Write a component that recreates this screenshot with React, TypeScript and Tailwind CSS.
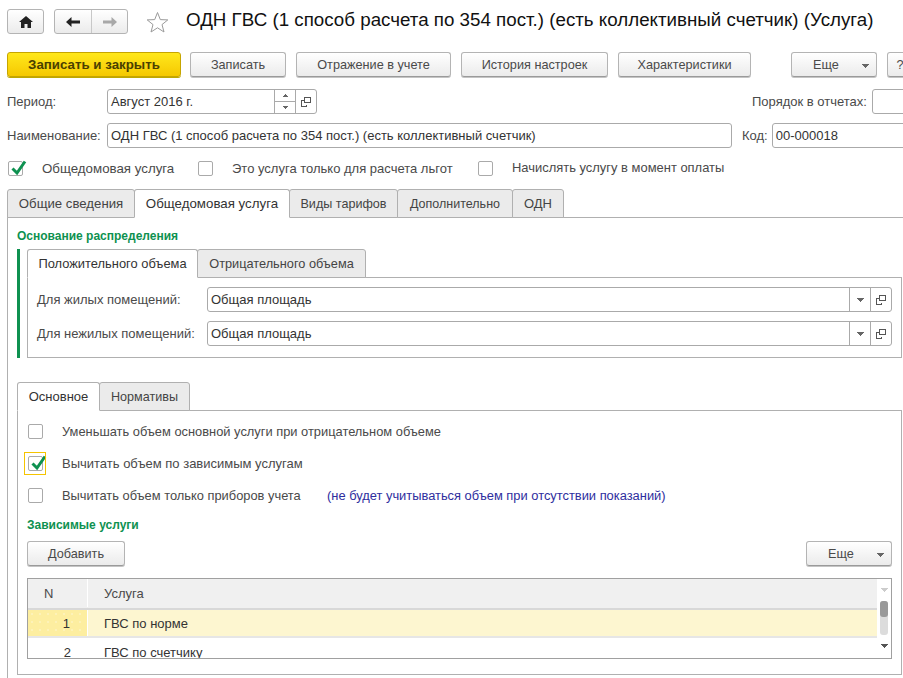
import type { ReactNode } from 'react';

const Copy = () => (
  <svg width="12" height="12" viewBox="0 0 12 12" fill="none" stroke="#555" strokeWidth="1" shapeRendering="crispEdges">
    <path d="M4.5 1.5h6v5h-6z" />
    <path d="M3.5 4.5h-2v6h5v-2" />
  </svg>
);

const Caret = ({ color = '#666' }: { color?: string }) => (
  <svg width="7" height="4" viewBox="0 0 7 4" shapeRendering="crispEdges">
    <path d="M0 0h7v1h-1v1h-1v1h-1v1h-1v-1h-1v-1h-1v-1h-1z" fill={color} />
  </svg>
);

const Check = () => (
  <svg width="20" height="20" viewBox="0 0 20 20" className="absolute left-[0px] top-[-4px]">
    <path d="M3.5 10.5 L8 15 L16 3.5" fill="none" stroke="#0e9150" strokeWidth="3" />
  </svg>
);

function Btn({ w, children, caret }: { w: string; children: ReactNode; caret?: boolean }) {
  return (
    <button className={`${w} relative h-[25px] shrink-0 rounded-[3px] border border-[#b4b4b4] border-b-[#9a9a9a] bg-gradient-to-b from-white to-[#ebebeb] pt-px text-[12.7px] text-[#4a4a4a] shadow-[0_1px_0_#c4c4c4]`}>
      <span className={caret ? 'pr-[16px]' : ''}>{children}</span>
      {caret && (
        <span className="absolute right-[7px] top-[11px] flex">
          <Caret />
        </span>
      )}
    </button>
  );
}

function Box({ checked }: { checked?: boolean }) {
  return (
    <span className="relative block h-[15px] w-[15px] shrink-0 rounded-[2px] border border-[#aaaaaa] bg-white">
      {checked && <Check />}
    </span>
  );
}

function Tab({ w, active, children }: { w: string; active?: boolean; children: ReactNode }) {
  return (
    <div
      className={`${w} -ml-px flex h-[29px] shrink-0 items-center justify-center rounded-t-[3px] border border-[#b0b0b0] first:ml-0 ${
        active ? 'z-10 border-b-white bg-white text-[#333333]' : 'bg-[#ebebeb] text-[#444444]'
      }`}
    >
      {children}
    </div>
  );
}

function Field({ w, children, caret }: { w: string; children: ReactNode; caret?: boolean }) {
  return (
    <div className={`${w} flex h-[25px] shrink-0 items-center rounded-[3px] border border-[#aaaaaa] bg-white text-[#333333]`}>
      <span className="flex-1 pl-[3px]">{children}</span>
      {caret && (
        <span className="flex h-full w-[21px] items-center justify-center border-l border-[#aaaaaa]">
          <Caret />
        </span>
      )}
      <span className="flex h-full w-[21px] items-center justify-center border-l border-[#aaaaaa]">
        <Copy />
      </span>
    </div>
  );
}

export default function App() {
  return (
    <div className="h-[678px] w-[903px] overflow-hidden bg-white font-['Liberation_Sans',Arial,sans-serif] text-[13px] leading-none text-[#4a4a4a]">
      {/* Title bar */}
      <div className="box-content flex h-[29px] items-center pl-[7px] pt-[7px]">
        <div className="flex h-[25px] w-[37px] items-center justify-center rounded-[3px] border border-[#b4b4b4] bg-gradient-to-b from-white to-[#ebebeb]">
          <svg width="14" height="12" viewBox="0 0 14 12">
            <path d="M7 0 L14 6 L12 6 L12 12 L8.5 12 L8.5 8 L5.5 8 L5.5 12 L2 12 L2 6 L0 6 Z" fill="#222" />
          </svg>
        </div>
        <div className="ml-[10px] flex h-[25px] w-[74px] rounded-[3px] border border-[#b4b4b4] bg-gradient-to-b from-white to-[#ebebeb]">
          <span className="flex w-[37px] items-center justify-center border-r border-[#c8c8c8]">
            <svg width="14" height="10" viewBox="0 0 14 10">
              <path d="M0 5 L5.5 0 V3.5 H14 V6.5 H5.5 V10 Z" fill="#222" />
            </svg>
          </span>
          <span className="flex flex-1 items-center justify-center">
            <svg width="14" height="10" viewBox="0 0 14 10">
              <path d="M14 5 L8.5 0 V3.5 H0 V6.5 H8.5 V10 Z" fill="#a8a8a8" />
            </svg>
          </span>
        </div>
        <svg className="ml-[18px]" width="23" height="22" viewBox="0 0 23 22">
          <path d="M11.5 1.5 L14.3 8.6 L21.8 8.9 L16 13.6 L18 21 L11.5 16.8 L5 21 L7 13.6 L1.2 8.9 L8.7 8.6 Z" fill="#fff" stroke="#9a9a9a" strokeWidth="1" />
        </svg>
        <h1 className="ml-[17px] -mt-[2px] whitespace-nowrap text-[18.75px] font-normal text-[#111111]">
          ОДН ГВС (1 способ расчета по 354 пост.) (есть коллективный счетчик) (Услуга)
        </h1>
      </div>

      {/* Command bar */}
      <div className="mt-[16px] flex pl-[7px]">
        <button className="h-[25px] w-[174px] shrink-0 rounded-[3px] border border-[#c6a500] bg-gradient-to-b from-[#ffe81a] to-[#f5c800] text-[13.3px] font-bold text-[#4a4000] shadow-[0_1px_0_#bda700]">
          Записать и закрыть
        </button>
        <div className="ml-[9px] flex gap-[10px]">
          <Btn w="w-[96px]">Записать</Btn>
          <Btn w="w-[155px]">Отражение в учете</Btn>
          <Btn w="w-[147px]">История настроек</Btn>
          <Btn w="w-[133px]">Характеристики</Btn>
        </div>
        <div className="ml-[40px] flex gap-[10px]">
          <Btn w="w-[86px]" caret>
            Еще
          </Btn>
          <Btn w="w-[40px]">
            <span className="-ml-[14px]">?</span>
          </Btn>
        </div>
      </div>

      {/* Period */}
      <div className="mt-[12px] flex items-center pl-[7px]">
        <span className="w-[100px] shrink-0">Период:</span>
        <div className="flex h-[25px] w-[210px] shrink-0 items-center rounded-[3px] border border-[#aaaaaa] text-[#333333]">
          <span className="flex-1 pl-[3px]">Август 2016 г.</span>
          <span className="flex h-full w-[21px] flex-col border-l border-[#aaaaaa]">
            <span className="flex flex-1 items-center justify-center border-b border-[#aaaaaa]">
              <svg width="5" height="3" viewBox="0 0 5 3" shapeRendering="crispEdges">
                <path d="M2 0h1v1h1v1h1v1h-5v-1h1v-1h1z" fill="#666" />
              </svg>
            </span>
            <span className="flex flex-1 items-center justify-center">
              <svg width="5" height="3" viewBox="0 0 5 3" shapeRendering="crispEdges">
                <path d="M0 0h5v1h-1v1h-1v1h-1v-1h-1v-1h-1z" fill="#666" />
              </svg>
            </span>
          </span>
          <span className="flex h-full w-[21px] items-center justify-center border-l border-[#aaaaaa]">
            <Copy />
          </span>
        </div>
        <span className="ml-[435px] shrink-0 whitespace-nowrap">Порядок в отчетах:</span>
        <div className="ml-[5px] h-[25px] w-[50px] shrink-0 rounded-[3px] border border-[#aaaaaa]" />
      </div>

      {/* Name */}
      <div className="mt-[9px] flex items-center pl-[7px]">
        <span className="w-[100px] shrink-0 whitespace-nowrap">Наименование:</span>
        <div className="flex h-[25px] w-[625px] shrink-0 items-center rounded-[3px] border border-[#aaaaaa] pl-[3px] text-[#333333]">
          ОДН ГВС (1 способ расчета по 354 пост.) (есть коллективный счетчик)
        </div>
        <span className="ml-[10px] shrink-0">Код:</span>
        <div className="ml-[4px] flex h-[25px] w-[140px] shrink-0 items-center rounded-[3px] border border-[#aaaaaa] pl-[3px] text-[#333333]">
          00-000018
        </div>
      </div>

      {/* Flags */}
      <div className="mt-[13px] flex items-center pl-[8px]">
        <Box checked />
        <span className="ml-[19px] w-[156px] text-[13.3px]">Общедомовая услуга</span>
        <Box />
        <span className="ml-[19px] w-[246px]">Это услуга только для расчета льгот</span>
        <Box />
        <span className="ml-[19px] text-[12.95px]">Начислять услугу в момент оплаты</span>
      </div>

      {/* Main tabs */}
      <div className="mt-[13px] flex pl-[7px]">
        <Tab w="w-[128px]">
          <span className="text-[13.2px]">Общие сведения</span>
        </Tab>
        <Tab w="w-[156px]" active>
          <span className="text-[13.3px]">Общедомовая услуга</span>
        </Tab>
        <Tab w="w-[109px]">
          <span className="pt-px text-[12.6px]">Виды тарифов</span>
        </Tab>
        <Tab w="w-[116px]">
          <span className="pt-px text-[12.5px]">Дополнительно</span>
        </Tab>
        <Tab w="w-[52px]">ОДН</Tab>
      </div>
      <div className="-mt-px ml-[7px] h-[470px] w-[910px] border border-[#b0b0b0] pl-[9px] pt-[12px]">
        <div className="text-[12px] font-bold text-[#0e9150]">Основание распределения</div>

        <div className="mt-[7px] w-[885px] border-l-[3px] border-[#0e9150] pl-[7px]">
          <div className="flex">
            <Tab w="w-[171px]" active>
              <span className="pt-px text-[12.9px]">Положительного объема</span>
            </Tab>
            <Tab w="w-[169px]">
              <span className="pt-px text-[12.75px]">Отрицательного объема</span>
            </Tab>
          </div>
          <div className="-mt-px h-[81px] w-[875px] border border-[#b0b0b0] pl-[9px] pt-[9px]">
            <div className="flex items-center">
              <span className="w-[170px] shrink-0">Для жилых помещений:</span>
              <Field w="w-[685px]" caret>
                Общая площадь
              </Field>
            </div>
            <div className="mt-[9px] flex items-center">
              <span className="w-[170px] shrink-0 whitespace-nowrap">Для нежилых помещений:</span>
              <Field w="w-[685px]" caret>
                Общая площадь
              </Field>
            </div>
          </div>
        </div>

        <div className="mt-[24px] flex">
          <Tab w="w-[83px]" active>
            Основное
          </Tab>
          <Tab w="w-[91px]">
            <span className="pt-px text-[12.6px]">Нормативы</span>
          </Tab>
        </div>
        <div className="-mt-px h-[265px] w-[885px] border border-[#b0b0b0] pl-[10px] pt-[13px]">
          <div className="flex h-[15px] items-center">
            <Box />
            <span className="ml-[19px] pt-px text-[12.87px]">Уменьшать объем основной услуги при отрицательном объеме</span>
          </div>
          <div className="mt-[17px] flex h-[15px] items-center">
            <span className="relative">
              <Box checked />
              <span className="absolute -inset-[4px] -right-[3px] border border-[#f5c400]" />
            </span>
            <span className="ml-[19px]">Вычитать объем по зависимым услугам</span>
          </div>
          <div className="mt-[17px] flex h-[15px] items-center">
            <Box />
            <span className="ml-[19px] w-[265px] shrink-0 pt-px text-[12.87px]">Вычитать объем только приборов учета</span>
            <span className="pt-px text-[12.89px] text-[#2e2e9e]">(не будет учитываться объем при отсутствии показаний)</span>
          </div>
          <div className="-ml-px mt-[16px] text-[12px] font-bold text-[#0e9150]">Зависимые услуги</div>
          <div className="-ml-px mt-[10px] flex w-[865px] justify-between">
            <Btn w="w-[98px]">Добавить</Btn>
            <Btn w="w-[86px]" caret>
              Еще
            </Btn>
          </div>
          <div className="-ml-px mt-[12px] flex h-[81px] w-[865px] overflow-hidden border border-[#a0a0a0]">
            <div className="flex-1 overflow-hidden">
              <div className="flex h-[31px] border-b-2 border-[#d8d8d8] bg-[#f0f0f0] pb-[1px]">
                <span className="flex w-[60px] items-center border-r border-white pl-[16px]">N</span>
                <span className="flex items-center pl-[16px]">Услуга</span>
              </div>
              <div className="flex h-[28px] border-b-2 border-[#e6e6e6] bg-[#fdf6d0] text-[#333333]">
                <span className="flex w-[60px] items-center justify-end border-r border-white bg-[#fdeea0] bg-[radial-gradient(#fdf2b8_1px,transparent_1px)] bg-[length:8px_8px] pr-[17px]">1</span>
                <span className="flex items-center pl-[16px]">ГВС по норме</span>
              </div>
              <div className="flex h-[28px] text-[#333333]">
                <span className="flex w-[60px] items-center justify-end pr-[17px]">2</span>
                <span className="flex items-center pl-[16px]">ГВС по счетчику</span>
              </div>
            </div>
            <div className="flex w-[14px] flex-col items-center pt-[9px]">
              <Caret color="#ccc" />
              <div className="mt-[9px] flex h-[34px] w-[8px] flex-col rounded-[3px] bg-[#dcdcdc]">
                <div className="h-[16px] rounded-[3px] bg-[#999999]" />
              </div>
              <div className="mt-[9px]">
                <Caret color="#555" />
              </div>
            </div>
          </div>
        </div>
      </div>
    </div>
  );
}
